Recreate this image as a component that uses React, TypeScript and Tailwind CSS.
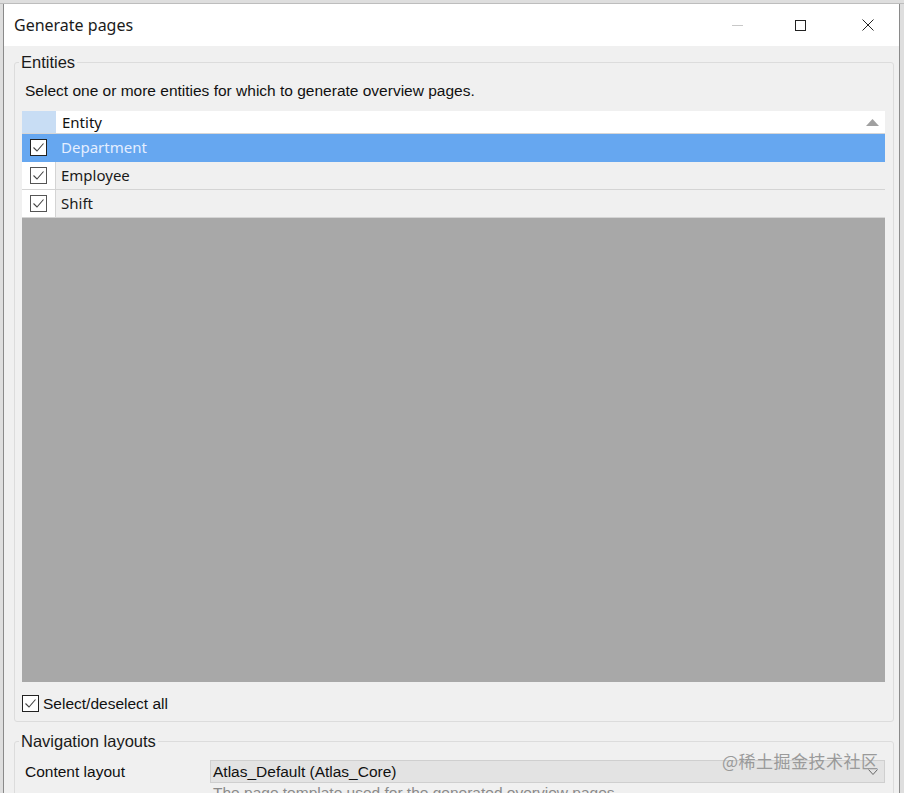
import { useState } from 'react';

const segoe = { fontFamily: '"Noto Sans", "Open Sans", sans-serif' };
const arial = { fontFamily: '"Liberation Sans", Arial, sans-serif' };

const entities = ['Department', 'Employee', 'Shift'];

function Check({ checked, dark }: { checked: boolean; dark?: boolean }) {
  return (
    <span
      className={`flex h-[17px] w-[17px] items-center justify-center border bg-white ${dark ? 'border-[#222]' : 'border-[#555]'}`}
    >
      {checked && (
        <svg width="13" height="11" viewBox="0 0 13 11" fill="none">
          <path d="M1.5 5.5 L5 9 L11.5 1.5" stroke="#444" strokeWidth="1.1" />
        </svg>
      )}
    </span>
  );
}

export default function App() {
  const [checked, setChecked] = useState<Record<string, boolean>>({
    Department: true,
    Employee: true,
    Shift: true,
  });
  const [selected, setSelected] = useState('Department');
  const allChecked = entities.every((e) => checked[e]);

  return (
    <div className="relative h-[793px] w-[904px] overflow-hidden bg-[#dedede]">
      {/* background window peeking out */}
      <div className="h-[4px] border-b border-[#bdbdbd]" />

      <div className="ml-[3px] mr-[4px] flex h-[789px] flex-col border-l border-r border-[#8a8a8a] bg-white">
        {/* Title bar */}
        <div className="flex h-[42px] shrink-0 items-center bg-white pl-[10px]">
          <span className="text-[16px] text-[#1b1b1b]" style={segoe}>
            Generate pages
          </span>
          <div className="ml-auto flex items-center">
            <span className="flex h-[42px] w-[56px] items-center justify-center">
              <span className="block h-px w-[11px] bg-[#c8c8c8]" />
            </span>
            <span className="flex h-[42px] w-[71px] items-center justify-center">
              <span className="block h-[11px] w-[11px] border border-[#222]" />
            </span>
            <span className="flex h-[42px] w-[63px] items-center justify-center">
              <svg width="12" height="12" viewBox="0 0 12 12">
                <path d="M0.5 0.5 L11.5 11.5 M11.5 0.5 L0.5 11.5" stroke="#222" strokeWidth="1" />
              </svg>
            </span>
          </div>
        </div>

        {/* Body */}
        <div className="flex flex-1 flex-col gap-[10px] bg-[#f0f0f0] pl-[10px] pr-[5px] pt-[7px]" style={arial}>
          <fieldset className="rounded-[3px] border border-[#dcdcdc] pb-[6px] pl-[7px] pr-[8px]">
            <legend className="ml-[-3px] px-[2px] text-[16.5px] leading-[18px] text-[#1a1a1a]">Entities</legend>
            <p className="pl-[3px] pt-[11px] text-[15.5px] leading-[17px] text-[#111]">
              Select one or more entities for which to generate overview pages.
            </p>

            <div className="mt-[12px] flex h-[571px] flex-col bg-[#a8a8a8]">
              {/* Header */}
              <div className="flex h-[23px] border-b border-[#d6d6d6] bg-white">
                <div className="w-[34px] bg-[#c8ddf4]" />
                <div className="flex flex-1 items-center pl-[6px] text-[15px] text-[#111]" style={segoe}>
                  Entity
                  <svg className="ml-auto mr-[6px]" width="13" height="7" viewBox="0 0 13 7">
                    <path d="M0 7 L6.5 0 L13 7 Z" fill="#a0a0a0" />
                  </svg>
                </div>
              </div>

              {entities.map((name) => {
                const active = selected === name;
                return (
                  <div
                    key={name}
                    onClick={() => setSelected(name)}
                    className={`flex h-[28px] border-b ${active ? 'border-[#66a7f0] bg-[#66a7f0]' : 'border-[#d4d4d4] bg-[#f0f0f0]'}`}
                  >
                    <div
                      className={`flex w-[34px] items-center justify-center border-r ${active ? 'border-[#66a7f0]' : 'border-[#d4d4d4] bg-white'}`}
                    >
                      <button
                        onClick={() => setChecked({ ...checked, [name]: !checked[name] })}
                        className="cursor-default"
                      >
                        <Check checked={checked[name]} dark={active} />
                      </button>
                    </div>
                    <div
                      className={`flex flex-1 items-center pl-[5px] text-[15px] ${active ? 'text-[#e4eeff]' : 'text-[#1a1a1a]'}`}
                      style={segoe}
                    >
                      {name}
                    </div>
                  </div>
                );
              })}
            </div>

            <label
              className="mt-[10px] flex items-center gap-[4px] text-[15.5px] text-[#111]"
              onClick={() => {
                const next = !allChecked;
                setChecked({ Department: next, Employee: next, Shift: next });
              }}
            >
              <Check checked={allChecked} dark />
              Select/deselect all
            </label>
          </fieldset>

          <fieldset className="rounded-[3px] border border-[#dcdcdc] pl-[10px] pr-[8px]">
            <legend className="ml-[-6px] px-[2px] text-[16.5px] leading-[18px] text-[#1a1a1a]">
              Navigation layouts
            </legend>
            <div className="mt-[10px] flex items-center">
              <span className="w-[185px] text-[15.5px] text-[#111]">Content layout</span>
              <div className="flex h-[23px] flex-1 items-center border border-[#cfcfcf] bg-[#e3e3e3] pl-[2px] text-[15.5px] text-[#111]">
                Atlas_Default (Atlas_Core)
                <svg className="ml-auto mr-[6px]" width="10" height="6" viewBox="0 0 10 6">
                  <path d="M0.5 0.5 L5 5.5 L9.5 0.5" stroke="#666" fill="none" />
                </svg>
              </div>
            </div>
            <p className="ml-[188px] mt-[0px] text-[15.5px] leading-[18px] text-[#8a8a8a]">
              The page template used for the generated overview pages.
            </p>
          </fieldset>
        </div>
      </div>

      {/* watermark */}
      <span
        className="absolute left-[722px] top-[748px] text-[17px] tracking-[0.5px] text-[#9a9a9a]"
        style={{ fontFamily: '"Noto Sans CJK SC", sans-serif' }}
      >
        @稀土掘金技术社区
      </span>
    </div>
  );
}
